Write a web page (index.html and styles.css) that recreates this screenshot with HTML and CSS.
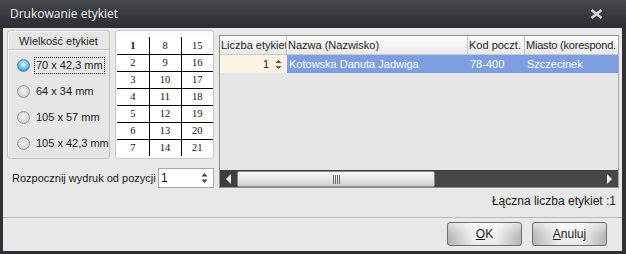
FILE: index.html
```html
<!DOCTYPE html>
<html lang="pl">
<head>
<meta charset="utf-8">
<title>Drukowanie etykiet</title>
<link rel="stylesheet" href="styles.css">
</head>
<body>
<div class="window">
  <div class="titlebar">
    <span class="title">Drukowanie etykiet</span>
    <svg class="close" width="13" height="10" viewBox="0 0 13 10"><path d="M1.5 1 L11.5 9 M11.5 1 L1.5 9" stroke="#d9d9d9" stroke-width="2.6" fill="none"/></svg>
  </div>
  <div class="client">
    <div class="main">
      <div class="left">
        <div class="top">
          <div class="group">
            <div class="group-head">Wielkość etykiet</div>
            <ul class="radios">
              <li class="radio"><span class="dot on"></span><span class="lbl focus">70 x 42,3 mm</span></li>
              <li class="radio"><span class="dot"></span><span class="lbl">64 x 34 mm</span></li>
              <li class="radio"><span class="dot"></span><span class="lbl">105 x 57 mm</span></li>
              <li class="radio"><span class="dot"></span><span class="lbl">105 x 42,3 mm</span></li>
            </ul>
          </div>
          <div class="sheet">
            <table class="cells">
              <tr><td class="b">1</td><td>8</td><td>15</td></tr>
              <tr><td>2</td><td>9</td><td>16</td></tr>
              <tr><td>3</td><td>10</td><td>17</td></tr>
              <tr><td>4</td><td>11</td><td>18</td></tr>
              <tr><td>5</td><td>12</td><td>19</td></tr>
              <tr><td>6</td><td>13</td><td>20</td></tr>
              <tr><td>7</td><td>14</td><td>21</td></tr>
            </table>
          </div>
        </div>
        <div class="start">
          <span class="start-lbl">Rozpocznij wydruk od pozycji</span>
          <div class="spin">
            <span>1</span>
            <svg class="arrows" width="7" height="12" viewBox="0 0 7 12"><path d="M3.5 1 L6.5 4.5 L0.5 4.5 Z M0.5 7.5 L6.5 7.5 L3.5 11 Z" fill="#444"/></svg>
          </div>
        </div>
      </div>
      <div class="right">
        <div class="grid">
          <div class="row head">
            <div class="c c1">Liczba etykiet</div>
            <div class="c c2">Nazwa (Nazwisko)</div>
            <div class="c c3">Kod poczt.</div>
            <div class="c c4">Miasto (korespond.</div>
          </div>
          <div class="row data">
            <div class="c c1 qty"><span>1</span><svg width="7" height="11" viewBox="0 0 7 11"><path d="M3.5 1 L6.5 4 L0.5 4 Z M0.5 7 L6.5 7 L3.5 10 Z" fill="#555"/></svg></div>
            <div class="c c2 sel">Kotowska Danuta Jadwiga</div>
            <div class="c c3 sel">78-400</div>
            <div class="c c4 sel">Szczecinek</div>
          </div>
          <div class="empty"></div>
          <div class="hscroll">
            <div class="sbtn"><svg width="6" height="10" viewBox="0 0 6 10"><path d="M5 0 L0 5 L5 10 Z" fill="#f0f0f0"/></svg></div>
            <div class="thumb"><span class="grip"></span></div>
            <div class="track"></div>
            <div class="sbtn"><svg width="6" height="10" viewBox="0 0 6 10"><path d="M0 0 L5 5 L0 10 Z" fill="#f0f0f0"/></svg></div>
          </div>
        </div>
        <div class="total">Łączna liczba etykiet :1</div>
      </div>
    </div>
    <div class="sep"></div>
    <div class="buttons">
      <button class="btn"><u>O</u>K</button>
      <button class="btn"><u>A</u>nuluj</button>
    </div>
  </div>
</div>
</body>
</html>
```

FILE: styles.css
```css
* { box-sizing: border-box; }
html, body { margin: 0; padding: 0; }
body {
  width: 626px;
  height: 254px;
  overflow: hidden;
  font-family: "Liberation Sans", Arial, sans-serif;
  font-size: 11px;
  color: #111;
}
.window {
  width: 626px;
  height: 254px;
  background: #2f3136;
  display: flex;
  flex-direction: column;
}
.titlebar {
  height: 28px;
  display: flex;
  align-items: center;
  justify-content: space-between;
  padding: 0 23px 2px 10px;
  background: linear-gradient(#46484e, #35373c 60%, #2c2e33);
}
.title {
  font-family: "Open Sans", "Liberation Sans", sans-serif;
  font-size: 12px;
  color: #f2f2f2;
}
.close { display: block; margin-top: 1px; }

.client {
  flex: 1;
  margin: 0 4px 3px 3px;
  background: #e8e8e8;
  display: flex;
  flex-direction: column;
}
.main {
  height: 180px;
  padding: 2px 3px 0 4px;
  display: flex;
  gap: 5px;
}
.left { width: 207px; display: flex; flex-direction: column; }
.top { display: flex; gap: 5px; height: 129px; }

.group {
  width: 103px;
  border: 1px solid #c4c4c4;
  border-radius: 3px;
  box-shadow: inset 1px 1px 0 #f6f6f6;
  background: #e6e6e6;
}
.group-head {
  height: 19px;
  border-bottom: 1px solid #c2c2c2;
  box-shadow: 0 1px 0 #f6f6f6;
  text-align: center;
  font-size: 11px;
  line-height: 18px;
  color: #222;
  padding-top: 1px;
  white-space: nowrap;
}
.radios { list-style: none; margin: 0; padding: 2px 0 0 0; }
.radio {
  height: 26px;
  display: flex;
  align-items: center;
  padding-left: 9px;
  white-space: nowrap;
}
.dot {
  width: 13px;
  height: 13px;
  border-radius: 50%;
  border: 1px solid #9a9a9a;
  background: radial-gradient(circle at 50% 45%, #f4f4f4 0, #e0e0e0 45%, #b8b8b8 100%);
  margin-right: 4px;
  flex: none;
}
.dot.on {
  border-color: #5c8fb8;
  background: radial-gradient(circle at 50% 40%, #e8f8ff 0, #9fdaf8 30%, #3b9ee0 70%, #2a74b8 100%);
}
.lbl {
  font-size: 11px;
  padding: 1px 1px;
  border: 1px solid transparent;
  line-height: 13px;
  color: #1a1a1a;
}
.lbl.focus { border: 1px dotted #222; }

.sheet {
  width: 99px;
  border: 1px solid #c8c8c8;
  border-radius: 3px;
  background: #fbfbfb;
  padding: 6px 0 0 1px;
}
.cells {
  border-collapse: collapse;
  width: 96px;
  background: #fff;
  font-family: "Liberation Serif", "Times New Roman", serif;
  font-size: 10.5px;
}
.cells td {
  width: 32px;
  height: 17px;
  padding: 0;
  text-align: center;
  border-right: 1px solid #000;
  border-bottom: 1px solid #000;
  line-height: 15px;
}
.cells td:last-child { border-right: none; }
.cells tr:last-child td { border-bottom: none; }
.cells td.b { font-weight: bold; }

.start {
  margin-top: 9px;
  height: 19px;
  display: flex;
  align-items: center;
  justify-content: space-between;
  padding-left: 5px;
  white-space: nowrap;
}
.start-lbl { font-size: 11px; color: #1a1a1a; }
.spin {
  width: 56px;
  height: 20px;
  border: 1px solid #a9a9a9;
  background: #fff;
  display: flex;
  align-items: center;
  justify-content: space-between;
  padding: 0 5px 0 2px;
  font-size: 12px;
}
.arrows { display: block; }

.right { width: 400px; display: flex; flex-direction: column; padding-top: 5px; }
.grid {
  height: 153px;
  border: 1px solid #8f8f8f;
  border-right-color: #a8a8a8;
  display: flex;
  flex-direction: column;
  background: #e6e6e6;
  overflow: hidden;
}
.row { display: flex; flex: none; }
.c {
  white-space: nowrap;
  overflow: hidden;
  padding-left: 2px;
  flex: none;
}
.c1 { width: 67px; }
.c2 { width: 181px; }
.c3 { width: 57px; }
.c4 { width: 110px; }
.head { height: 19px; background: linear-gradient(#fdfdfd, #f2f2f2 60%, #e9e9e9); border-bottom: 1px solid #c9c9c9; }
.head .c {
  border-right: 1px solid #c6c6c6;
  line-height: 18px;
  font-size: 11px;
  color: #222;
  padding-left: 1px;
}
.head .c4 { border-right: none; letter-spacing: -0.2px; }
.data { height: 18px; }
.data .c { line-height: 18px; }
.qty {
  background: #fdf3e4;
  display: flex;
  justify-content: flex-end;
  align-items: center;
  gap: 6px;
  padding-right: 5px;
  color: #222;
}
.qty svg { display: block; }
.sel { background: #7d9fe2; color: #fff; }
.empty { flex: 1; }
.hscroll {
  height: 17px;
  display: flex;
  background: #474747;
  border-top: 1px solid #3a3a3a;
  flex: none;
}
.sbtn {
  width: 17px;
  display: flex;
  align-items: center;
  justify-content: center;
  background: #3e3e3e;
}
.hscroll .sbtn:last-child { background: #474747; margin-left: auto; }
.thumb {
  width: 198px;
  border: 1px solid #8a8a8a;
  border-radius: 2px;
  background: linear-gradient(#fafafa, #e8e8e8 45%, #d2d2d2);
  display: flex;
  align-items: center;
  justify-content: center;
}
.grip {
  width: 7px;
  height: 9px;
  background: repeating-linear-gradient(to right, #6a6a6a 0 1px, transparent 1px 2px);
}
.track { flex: 1; }
.total {
  margin-top: 6px;
  text-align: right;
  padding-right: 3px;
  font-size: 12px;
  color: #1a1a1a;
}

.sep {
  margin-top: 9px;
  height: 1px;
  background: #b8b8b8;
}
.buttons {
  margin-top: 4px;
  display: flex;
  justify-content: flex-end;
  gap: 10px;
  padding-right: 15px;
}
.btn {
  width: 75px;
  height: 24px;
  border: 1px solid #6e6e6e;
  border-radius: 3px;
  background:
    linear-gradient(rgba(255,255,255,0.55), rgba(255,255,255,0) 50%, rgba(0,0,0,0.04)),
    linear-gradient(to right, #b9b9b9, #f3f3f3 35%, #f3f3f3 65%, #b9b9b9);
  font-family: "Liberation Sans", Arial, sans-serif;
  font-size: 12px;
  color: #1a1a1a;
  padding: 0;
}
.btn u { text-underline-offset: 1px; }
```
